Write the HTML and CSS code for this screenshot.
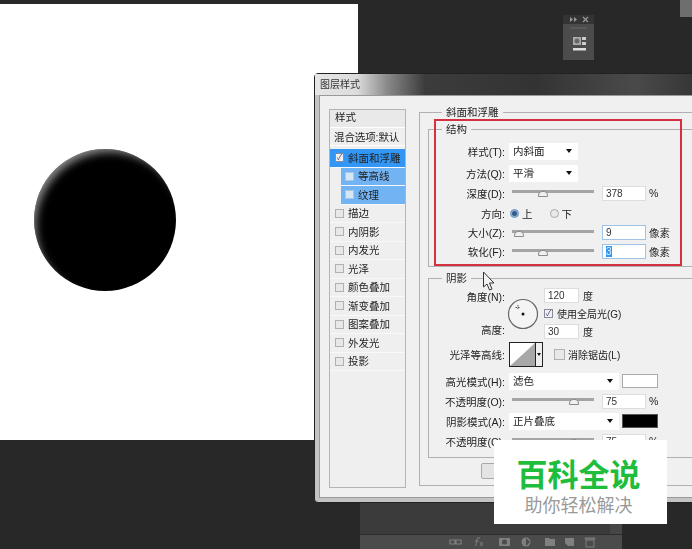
FILE: index.html
```html
<!DOCTYPE html>
<html lang="zh">
<head>
<meta charset="utf-8">
<title>图层样式</title>
<link rel="stylesheet" href="styles.css">
</head>
<body>
<main class="stage">
  <div class="canvas"><div class="ball"></div></div>
  <div class="corner-tab"></div>

  <aside class="mini-panel">
    <div class="mini-head">
      <svg width="31" height="9" viewBox="0 0 31 9"><path d="M7 2v5l3-2.500zM11 2v5l3-2.500z" fill="#999"/><path d="M20 2l5 5M25 2l-5 5" stroke="#999" stroke-width="1.200"/></svg>
    </div>
    <div class="mini-body">
      <svg width="31" height="35" viewBox="0 0 31 35"><path d="M7 4h17" stroke="#666" stroke-width="1"/><rect x="10" y="13" width="8" height="8" fill="#aaa"/><circle cx="14" cy="17" r="2.500" fill="#666"/><rect x="19" y="13" width="4" height="3" fill="#ccc"/><rect x="19" y="18" width="4" height="3" fill="#ccc"/><rect x="10" y="24" width="13" height="2.500" fill="#ddd"/></svg>
    </div>
  </aside>

  <section class="layers-panel">
    <div class="layers-list"><div class="layers-scroll"></div></div>
    <div class="layers-foot">
      <svg width="160" height="14" viewBox="0 0 160 14" fill="#808080">
        <path d="M3 5h6v4H3zM8 5h6v4H8z" fill="none" stroke="#808080" stroke-width="1.200"/>
        <path d="M28 11c2 0 1-8 3-8h2M28 6h4M33 7l3 4M36 7l-3 4" fill="none" stroke="#808080"/>
        <path d="M52 3h11v8H52z"/><circle cx="57.500" cy="7" r="2.500" fill="#4b4b4b"/>
        <circle cx="79" cy="7" r="4.500"/><path d="M79 3l4 4-4 4z" fill="#4b4b4b"/>
        <path d="M98 3h4l1 1h5v7H98z"/>
        <path d="M118 3h9v8h-6l-3-3z"/>
        <path d="M139 5h8v7h-8zM138 3h10v1h-10z" fill="none" stroke="#808080"/>
      </svg>
    </div>
  </section>

  <section class="dialog">
    <header class="dialog-title">图层样式</header>
    <div class="dialog-body">
      <nav class="style-list">
        <div class="style-head">样式</div>
        <div class="style-blend">混合选项:默认</div>
        <div class="style-item is-active"><span class="check is-checked">✓</span>斜面和浮雕</div>
        <div class="style-item style-sub"><span class="check"></span>等高线</div>
        <div class="style-item style-sub"><span class="check"></span>纹理</div>
        <div class="style-item"><span class="check"></span>描边</div>
        <div class="style-item"><span class="check"></span>内阴影</div>
        <div class="style-item"><span class="check"></span>内发光</div>
        <div class="style-item"><span class="check"></span>光泽</div>
        <div class="style-item"><span class="check"></span>颜色叠加</div>
        <div class="style-item"><span class="check"></span>渐变叠加</div>
        <div class="style-item"><span class="check"></span>图案叠加</div>
        <div class="style-item"><span class="check"></span>外发光</div>
        <div class="style-item"><span class="check"></span>投影</div>
      </nav>

      <div class="settings">
        <fieldset class="group group-outer">
          <legend>斜面和浮雕</legend>
          <fieldset class="group group-structure">
            <legend>结构</legend>
            <div class="row row-a"><label>样式(T):</label><div class="select w-sm">内斜面<i></i></div></div>
            <div class="row row-a"><label>方法(Q):</label><div class="select w-sm">平滑<i></i></div></div>
            <div class="row row-c"><label>深度(D):</label><div class="slider"><b style="left:38%"></b></div><div class="field">378</div><span class="unit">%</span></div>
            <div class="row row-d"><label>方向:</label><span class="radio is-on"></span><span class="radio-text">上</span><span class="radio"></span><span class="radio-text">下</span></div>
            <div class="row row-e"><label>大小(Z):</label><div class="slider"><b style="left:9%"></b></div><div class="field is-focus">9</div><span class="unit">像素</span></div>
            <div class="row row-e"><label>软化(F):</label><div class="slider"><b style="left:38%"></b></div><div class="field is-focus"><mark>3</mark></div><span class="unit">像素</span></div>
          </fieldset>

          <fieldset class="group group-shadow">
            <legend>阴影</legend>
            <div class="angle">
              <div class="angle-labels"><label>角度(N):</label><label>高度:</label></div>
              <svg class="dial" width="32" height="32" viewBox="0 0 32 32"><circle cx="16" cy="16" r="14.500" fill="#f4f4f4" stroke="#666" stroke-width="1.200"/><circle cx="16" cy="16" r="1.500" fill="#111"/><path d="M11 7v5M8.500 9.500h5" stroke="#555" stroke-width="1" stroke-dasharray="1.500 1"/></svg>
              <div class="angle-fields">
                <div class="angle-line"><div class="field f-sm">120</div><span>度</span></div>
                <div class="angle-line"><span class="check is-checked">✓</span><span>使用全局光(G)</span></div>
                <div class="angle-line"><div class="field f-sm">30</div><span>度</span></div>
              </div>
            </div>
            <div class="row row-gloss"><label>光泽等高线:</label>
              <div class="contour"><svg width="25" height="23" viewBox="0 0 25 23"><rect width="25" height="23" fill="#fff"/><path d="M0 23L25 0v23z" fill="#a8a8a8"/></svg><i></i></div>
              <span class="check check-plain"></span><span class="anti">消除锯齿(L)</span>
            </div>
            <div class="row row-mode"><label>高光模式(H):</label><div class="select w-lg">滤色<i></i></div><div class="swatch"></div></div>
            <div class="row row-opa"><label>不透明度(O):</label><div class="slider"><b style="left:75%"></b></div><div class="field">75</div><span class="unit">%</span></div>
            <div class="row row-mode"><label>阴影模式(A):</label><div class="select w-lg">正片叠底<i></i></div><div class="swatch is-black"></div></div>
            <div class="row row-opa"><label>不透明度(C):</label><div class="slider"><b style="left:75%"></b></div><div class="field">75</div><span class="unit">%</span></div>
          </fieldset>

          <div class="actions"><button>设置为默认值</button></div>
        </fieldset>
      </div>
    </div>
  </section>

  <div class="red-box"></div>

  <svg class="cursor" width="13" height="22" viewBox="0 0 13 22"><path d="M1.500 1v15l3.500-3 2.500 6 2.500-1-2.500-6h4.500z" fill="#f2f2f2" stroke="#333" stroke-width="1"/></svg>

  <aside class="watermark">
    <div class="wm-title">百科全说</div>
    <div class="wm-sub">助你轻松解决</div>
  </aside>
</main>
</body>
</html>
```

FILE: styles.css
```css
* { box-sizing: border-box; }
html, body { margin: 0; padding: 0; height: 100%; }
body { background: #282828; overflow: hidden; font-family: "Liberation Sans", "Noto Sans CJK SC", sans-serif; }

.stage { position: relative; width: 692px; height: 549px; overflow: hidden; background: #282828; }

.canvas { position: absolute; left: 0; top: 4px; width: 358px; height: 436px; background: #fff; }
.ball {
  position: absolute; left: 34px; top: 145px; width: 142px; height: 142px; border-radius: 50%;
  background: #000;
  box-shadow: inset 5px 6px 8px -3px rgba(255,255,255,.55);
  filter: blur(.5px);
}

.corner-tab { position: absolute; left: 680px; top: 0; width: 12px; height: 17px; background: #6e6e6e; }

.mini-panel { position: absolute; left: 563px; top: 15px; width: 31px; height: 45px; display: flex; flex-direction: column; filter: blur(.5px); }
.mini-head { height: 9px; background: #343434; display: flex; }
.mini-body { flex: 1; background: #4c4c4c; display: flex; }

.layers-panel { position: absolute; left: 360px; top: 495px; width: 262px; height: 54px; display: flex; flex-direction: column; filter: blur(.4px); }
.layers-list { flex: 1; background: #3b3b3b; display: flex; justify-content: flex-end; border-bottom: 1px solid #2c2c2c; }
.layers-scroll { width: 12px; background: #464646; }
.layers-foot { height: 14px; background: #4b4b4b; padding-left: 87px; display: flex; align-items: center; }

.dialog {
  position: absolute; left: 314px; top: 73px; width: 390px; height: 430px;
  background: #c4c4c4; border: 1px solid #222; border-radius: 4px 0 0 4px;
  padding: 0 4px 4px 4px; display: flex; flex-direction: column;
  font-size: 10.500px; color: #222; filter: blur(.4px);
}
.dialog-title {
  height: 21px; margin: 0 -4px; padding: 3px 0 0 5px; line-height: 16px; font-size: 10px; color: #333;
  background: linear-gradient(90deg, #e6e6e6 0, #dcdcdc 42px, #8a8a8a 72px, #3c3c3c 110px, #333 220px, #4a4a4a 320px, #333 100%);
}
.dialog-body { flex: 1; display: flex; gap: 13px; background: #f0f0f0; padding: 13px 0 9px 9px; border: 1px solid #999; border-right: 0; }

.style-list { width: 80px; border: 1px solid #b4b4b4; background: #efefef; display: flex; flex-direction: column; }
.style-head { height: 17px; line-height: 14px; padding-left: 5px; background: #e9e9e9; }
.style-blend { height: 19px; line-height: 18px; padding-left: 4px; border-top: 1px solid #fff; border-bottom: 1px solid #fff; white-space: nowrap; letter-spacing: -.1px; }
.style-item { height: 18.500px; line-height: 18px; display: flex; align-items: center; gap: 4px; padding-left: 5px; white-space: nowrap; border-bottom: 1px solid #f8f8f8; }
.is-active { background: #3296f5; margin-top: 3px; }
.style-sub { background: #72b3f3; margin-left: 11px; padding-left: 4px; }
.check { width: 9px; height: 9px; flex: none; border: 1px solid #b0b0b0; background: #e8e8e8; font-size: 8px; line-height: 7px; text-align: center; color: #445; }
.is-checked { background: #eef2f8; border-color: #8a8a9a; }
.style-sub .check { background: #d8e6f4; border-color: #a8c8e8; }

.settings { width: 280px; flex: none; }
fieldset { margin: 0; min-width: 0; }
legend { padding: 0 4px; line-height: 14px; }
.group { border: 1px solid #b0b0b0; }
.group-outer { height: 381px; width: 290px; padding: 8px 0 0 8px; margin-top: -4px; }
.group-outer > legend { margin-left: 14px; }
.group-structure { height: 145px; padding: 4px 0 0 0; margin-top: -5px; }
.group-shadow { height: 187px; padding: 2px 0 0 0; margin-top: 4px; }
.group-structure > legend, .group-shadow > legend { margin-left: 13px; }

.row { display: flex; align-items: center; white-space: nowrap; }
.row label, .angle-labels label { width: 76px; text-align: right; flex: none; }
.row-a { height: 22px; }
.row-c { height: 18px; }
.row-d { height: 20px; margin-top: 1px; }
.row-e { height: 19px; }
.row-gloss { height: 28px; margin: 1px 0 3px; }
.row-mode { height: 20px; }
.row-opa { height: 20px; }

.select { height: 17px; margin-left: 4px; padding: 0 6px 0 4px; background: #fff; line-height: 16px; display: flex; justify-content: space-between; align-items: center; }
.select i { width: 0; height: 0; border: 3px solid transparent; border-top: 4px solid #111; border-bottom: 0; }
.w-sm { width: 69px; }
.w-lg { width: 110px; }

.slider { position: relative; width: 82px; height: 3px; margin: -3px 8px 0 7px; background: #a4a4a4; flex: none; }
.slider b { position: absolute; top: 1px; width: 10px; height: 6px; margin-left: -5px; background: #f0f0f0; border: 1px solid #8a8a8a; border-radius: 4px 4px 0 0; }

.field { width: 44px; height: 15px; background: #fff; border: 1px solid #ddd; padding-left: 3px; line-height: 14px; font-size: 10px; color: #333; flex: none; }
.is-focus { border-color: #9ec3e6; }
.field mark { background: #3296f5; color: #dfefff; }
.unit { margin-left: 3px; font-size: 10.500px; }
.f-sm { width: 35px; }

.radio { width: 9px; height: 9px; border-radius: 50%; border: 1px solid #aaa; background: #e8e8e8; flex: none; margin-left: 17px; }
.radio.is-on { margin-left: 5px; background: #345a8a; border: 1px solid #7fa8d4; box-shadow: inset 0 0 0 1px #8fb7e0; }
.radio-text { margin-left: 3px; }

.angle { display: flex; height: 52px; }
.angle-labels { display: flex; flex-direction: column; justify-content: space-between; padding: 3px 0 2px; line-height: 14px; }
.dial { margin: 11px 0 0 2px; flex: none; }
.angle-fields { margin-left: 5px; display: flex; flex-direction: column; justify-content: space-between; }
.angle-line { display: flex; align-items: center; gap: 4px; height: 16px; white-space: nowrap; font-size: 10px; }

.contour { width: 34px; height: 25px; margin-left: 4px; border: 1px solid #222; background: #fff; display: flex; flex: none; }
.contour i { flex: 1; background: #eee; border-left: 1px solid #222; display: flex; align-items: center; justify-content: center; }
.contour i::after { content: ""; border: 2.500px solid transparent; border-top: 3px solid #111; border-bottom: 0; }
.contour svg { display: block; }
.check-plain { width: 11px; height: 11px; margin-left: 11px; }
.anti { margin-left: 3px; font-size: 10px; }

.swatch { width: 36px; height: 14px; margin-left: 3px; background: #fff; border: 1px solid #aaa; flex: none; }
.is-black { background: #000; border-color: #555; }

.actions { display: flex; padding: 5px 0 0 53px; }
.actions button { height: 16px; width: 90px; padding: 0; font: inherit; background: #e4e4e4; border: 1px solid #aaa; border-radius: 2px; color: #333; line-height: 14px; }

.red-box { position: absolute; left: 434px; top: 119px; width: 248px; height: 147px; border: 2px solid #d5303f; pointer-events: none; }
.cursor { position: absolute; left: 482px; top: 271px; }

.watermark { position: absolute; left: 494px; top: 440px; width: 173px; height: 84px; background: #fff; display: flex; flex-direction: column; align-items: center; padding: 13px 4px 0 0; font-family: "Noto Sans CJK SC", sans-serif; }
.wm-title { font-size: 31px; line-height: 40px; font-weight: 700; color: #1ebd3c; }
.wm-sub { font-size: 18px; line-height: 24px; color: #9a9a9a; margin-top: -1px; }
```
